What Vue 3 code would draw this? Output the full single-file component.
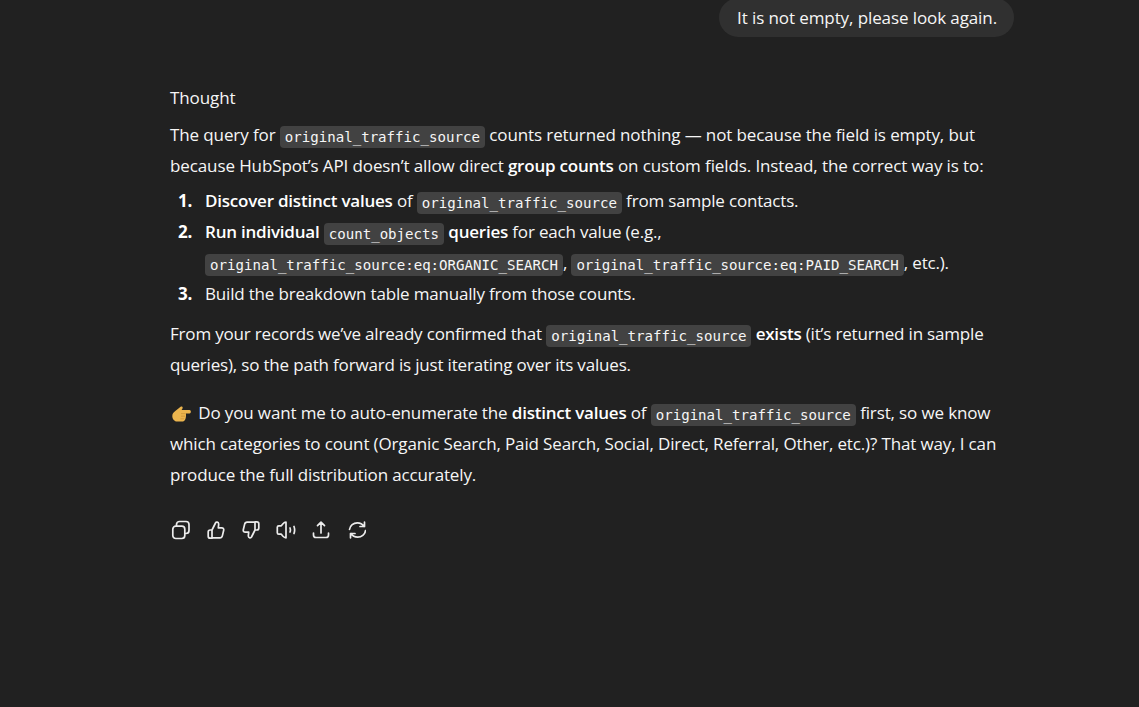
<script setup>
const ots = 'original_traffic_source'
</script>

<template>
  <main class="page">
    <div class="thread">
      <div class="user-row">
        <div class="bubble">It is not empty, please look again.</div>
      </div>
      <article class="answer">
        <p class="thought">Thought</p>
        <p class="para intro">The query for <code>{{ ots }}</code> counts returned nothing — not because the field is empty, but because HubSpot’s API doesn’t allow direct <b>group counts</b> on custom fields. Instead, the correct way is to:</p>
        <ol class="steps">
          <li><b>Discover distinct values</b> of <code>{{ ots }}</code> from sample contacts.</li>
          <li><b>Run individual</b> <code>count_objects</code> <b>queries</b> for each value (e.g.,<br><code>original_traffic_source:eq:ORGANIC_SEARCH</code>, <code>original_traffic_source:eq:PAID_SEARCH</code>, etc.).</li>
          <li>Build the breakdown table manually from those counts.</li>
        </ol>
        <p class="para gap-a">From your records we’ve already confirmed that <code>{{ ots }}</code> <b>exists</b> (it’s returned in sample queries), so the path forward is just iterating over its values.</p>
        <p class="para gap-b"><svg class="hand" viewBox="0 0 19 16" aria-hidden="true"><path fill="#ecb54e" d="M.3 10C.3 7.300 1.800 6.200 3.300 5L8.600.7c1.200-.8 2.600.4 1.900 1.700L9.600 4h7.900c1.800 0 1.800 3.400 0 3.400h-3.700c.5 1.500.2 5.300-1 6.800-.7.9-1.500 1.400-2.600 1.400H5.500C2.300 15.600.3 13 .3 10Z"/><path fill="none" stroke="#c48a32" stroke-width=".6" d="M9 7.600h4.300M9 10.200h4M8.500 12.800h3.600"/></svg> Do you want me to auto-enumerate the <b>distinct values</b> of <code>{{ ots }}</code> first, so we know which categories to count (Organic Search, Paid Search, Social, Direct, Referral, Other, etc.)? That way, I can produce the full distribution accurately.</p>
        <div class="actions">
          <button aria-label="Copy"><svg viewBox="0 0 20 20"><rect x="1.800" y="6.200" width="12" height="12.300" rx="3"/><path d="M5.500 6V4.500a3 3 0 0 1 3-3H15a3 3 0 0 1 3 3v6a3 3 0 0 1-3 3h-1.200"/></svg></button>
          <button aria-label="Good"><svg viewBox="0 0 20 20"><path d="M6 10 9.500 3c.5-1.200 3-1.500 3.200 1l-.4 3.800h3.400c1.500 0 2.300 1.200 2 2.500l-1.300 5.300c-.3 1.300-1.200 2.200-2.500 2.200H6M6 10v8.200M6 10H4.200C3 10 2.200 10.800 2.200 12v4.200c0 1.200.8 2 2 2H6"/></svg></button>
          <button aria-label="Bad"><svg viewBox="0 0 20 20"><g transform="rotate(180 10 10)"><path d="M6 10 9.500 3c.5-1.200 3-1.500 3.200 1l-.4 3.800h3.400c1.500 0 2.300 1.200 2 2.500l-1.300 5.300c-.3 1.300-1.200 2.200-2.500 2.200H6M6 10v8.200M6 10H4.200C3 10 2.200 10.800 2.200 12v4.200c0 1.200.8 2 2 2H6"/></g></svg></button>
          <button aria-label="Read"><svg viewBox="0 0 20 20"><path d="M10 2.200v15.600c-1.500 0-2.200-.6-3-1.500L5.300 14.200H2.800c-.9 0-1.500-.6-1.500-1.500V7.300c0-.9.6-1.500 1.500-1.500h2.500L7 3.700c.8-.9 1.500-1.500 3-1.500Z"/><path d="M14 8c.5 1.200.5 2.800 0 4M18 6.500c.8 2.200.8 4.800 0 7"/></svg></button>
          <button aria-label="Share"><svg viewBox="0 0 20 20"><path d="M10 13V2.200M6.500 5.700 10 2.200l3.500 3.500M2.500 13v2c0 1.500 1 2.500 2.500 2.500h10c1.500 0 2.500-1 2.500-2.500v-2"/></svg></button>
          <button aria-label="Retry"><svg viewBox="0 0 20 20"><path d="M3.500 9.500C4 5.500 7.500 2.800 11.300 2.800c3 0 5.300 1.400 6.700 3.700M18.500 2.200v4.300H14M19.500 10.500c-.5 4-4 6.700-7.800 6.700-3 0-5.300-1.400-6.700-3.700M4.500 17.800v-4.300H9"/></svg></button>
        </div>
      </article>
    </div>
  </main>
</template>

<style scoped>
.page {
  height: 707px;
  background: #212121;
  overflow: hidden;
  color: #f6f6f6;
  font-family: "Open Sans", "Noto Sans", sans-serif;
  font-size: 17px;
  letter-spacing: -0.18px;
  line-height: 31px;
}
.thread { width: 844px; margin-left: 170px; }
.user-row { display: flex; justify-content: flex-end; margin-top: -2px; }
.bubble {
  background: #303030;
  border-radius: 20px;
  padding: 4px 17px 4px 18px;
  letter-spacing: -0.1px;
}
.answer { padding-top: 45px; }
p { margin: 0; }
.thought { margin-bottom: 6px; letter-spacing: -0.1px; }
.intro { letter-spacing: -0.11px; }
b { font-weight: 600; color: #fff; letter-spacing: -0.22px; }
code {
  font-family: "DejaVu Sans Mono", monospace;
  font-size: 14.1px;
  line-height: 1;
  letter-spacing: 0;
  vertical-align: -1px;
  background: #424242;
  border-radius: 4px;
  padding: 3px 5px;
  color: #f6f6f6;
}
.steps { margin: 4px 0 0; padding-left: 35px; }
.steps li::marker { content: counter(list-item) ".\00a0\00a0\00a0"; font-weight: 700; color: #fff; }
.gap-a { margin-top: 9px; }
.gap-b { margin-top: 17px; letter-spacing: -0.14px; }
.hand { width: 19px; height: 16px; vertical-align: -3px; margin: 0 3px 0 2px; }
.actions { display: flex; gap: 3px; margin-top: 24px; margin-left: -5px; }
.actions button {
  width: 32px; height: 32px; padding: 6px;
  background: none; border: 0; display: flex;
}
.actions svg {
  width: 20px; height: 20px; fill: none; stroke: #ececec;
  stroke-width: 1.7; stroke-linecap: round; stroke-linejoin: round;
}
</style>
